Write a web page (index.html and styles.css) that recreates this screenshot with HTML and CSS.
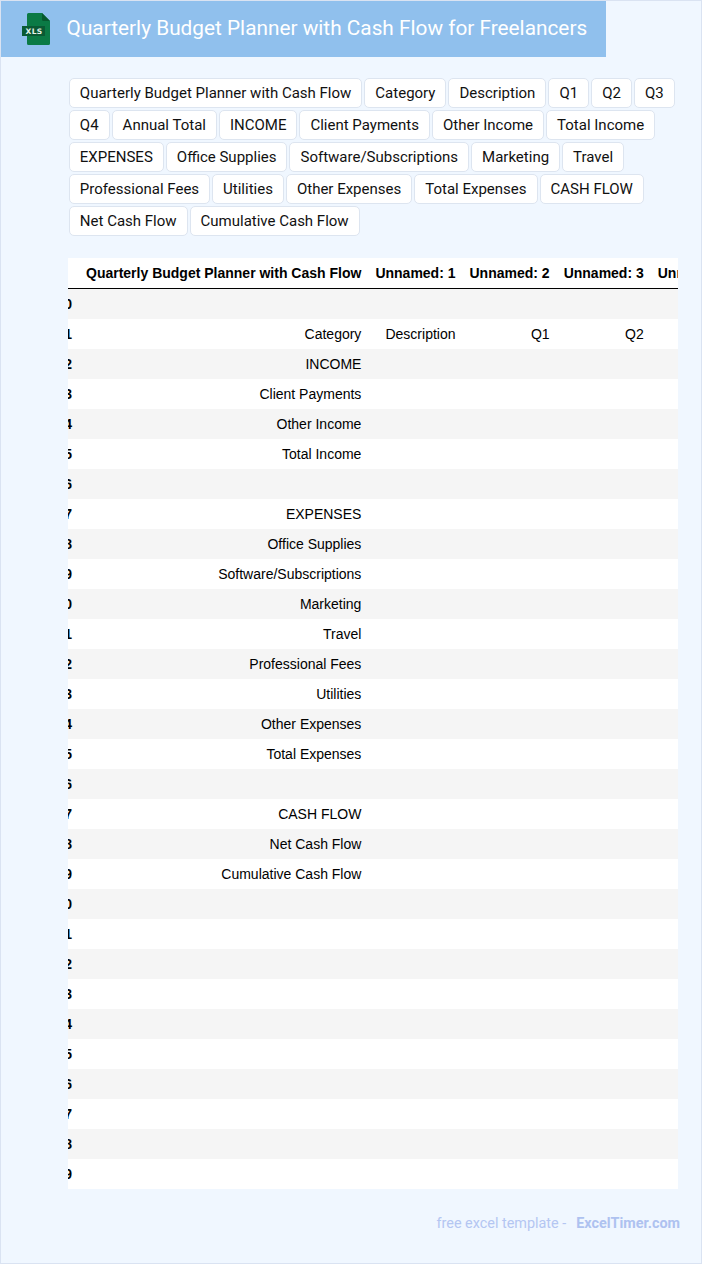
FILE: index.html
```html
<!DOCTYPE html>
<html lang="en">
<head>
<meta charset="utf-8">
<title>Quarterly Budget Planner with Cash Flow for Freelancers</title>
<link rel="stylesheet" href="styles.css">
</head>
<body>
<div class="page">
  <header class="banner">
    <svg class="logo" viewBox="0 0 30 32" width="30" height="32" aria-hidden="true">
      <path d="M5 1.500a1.500 1.500 0 0 1 1.500-1.500H20l8 8v22.500a1.500 1.500 0 0 1-1.500 1.500H6.500A1.500 1.500 0 0 1 5 30.500z" fill="#0b7a45"/>
      <path d="M20 0l8 8h-6.500a1.500 1.500 0 0 1-1.500-1.500z" fill="#07592f"/>
      <rect x="0" y="13" width="23" height="10" fill="#0a5a34"/>
      <text class="logo-text" x="12" y="21" text-anchor="middle">XLS</text>
    </svg>
    <h1 class="title">Quarterly Budget Planner with Cash Flow for Freelancers</h1>
  </header>
  <main class="content">
    <div class="tags">
      <span class="tag">Quarterly Budget Planner with Cash Flow</span>
      <span class="tag">Category</span>
      <span class="tag">Description</span>
      <span class="tag">Q1</span>
      <span class="tag">Q2</span>
      <span class="tag">Q3</span>
      <span class="tag">Q4</span>
      <span class="tag">Annual Total</span>
      <span class="tag">INCOME</span>
      <span class="tag">Client Payments</span>
      <span class="tag">Other Income</span>
      <span class="tag">Total Income</span>
      <span class="tag">EXPENSES</span>
      <span class="tag">Office Supplies</span>
      <span class="tag">Software/Subscriptions</span>
      <span class="tag">Marketing</span>
      <span class="tag">Travel</span>
      <span class="tag">Professional Fees</span>
      <span class="tag">Utilities</span>
      <span class="tag">Other Expenses</span>
      <span class="tag">Total Expenses</span>
      <span class="tag">CASH FLOW</span>
      <span class="tag">Net Cash Flow</span>
      <span class="tag">Cumulative Cash Flow</span>
    </div>
    <div class="table-wrap">
      <table class="sheet">
        <thead>
          <tr><th></th><th>Quarterly Budget Planner with Cash Flow</th><th>Unnamed: 1</th><th>Unnamed: 2</th><th>Unnamed: 3</th><th>Unnamed: 4</th></tr>
        </thead>
        <tbody>
          <tr><th>0</th><td></td><td></td><td></td><td></td><td></td></tr>
          <tr><th>1</th><td>Category</td><td>Description</td><td>Q1</td><td>Q2</td><td>Q3</td></tr>
          <tr><th>2</th><td>INCOME</td><td></td><td></td><td></td><td></td></tr>
          <tr><th>3</th><td>Client Payments</td><td></td><td></td><td></td><td></td></tr>
          <tr><th>4</th><td>Other Income</td><td></td><td></td><td></td><td></td></tr>
          <tr><th>5</th><td>Total Income</td><td></td><td></td><td></td><td></td></tr>
          <tr><th>6</th><td></td><td></td><td></td><td></td><td></td></tr>
          <tr><th>7</th><td>EXPENSES</td><td></td><td></td><td></td><td></td></tr>
          <tr><th>8</th><td>Office Supplies</td><td></td><td></td><td></td><td></td></tr>
          <tr><th>9</th><td>Software/Subscriptions</td><td></td><td></td><td></td><td></td></tr>
          <tr><th>10</th><td>Marketing</td><td></td><td></td><td></td><td></td></tr>
          <tr><th>11</th><td>Travel</td><td></td><td></td><td></td><td></td></tr>
          <tr><th>12</th><td>Professional Fees</td><td></td><td></td><td></td><td></td></tr>
          <tr><th>13</th><td>Utilities</td><td></td><td></td><td></td><td></td></tr>
          <tr><th>14</th><td>Other Expenses</td><td></td><td></td><td></td><td></td></tr>
          <tr><th>15</th><td>Total Expenses</td><td></td><td></td><td></td><td></td></tr>
          <tr><th>16</th><td></td><td></td><td></td><td></td><td></td></tr>
          <tr><th>17</th><td>CASH FLOW</td><td></td><td></td><td></td><td></td></tr>
          <tr><th>18</th><td>Net Cash Flow</td><td></td><td></td><td></td><td></td></tr>
          <tr><th>19</th><td>Cumulative Cash Flow</td><td></td><td></td><td></td><td></td></tr>
          <tr><th>20</th><td></td><td></td><td></td><td></td><td></td></tr>
          <tr><th>21</th><td></td><td></td><td></td><td></td><td></td></tr>
          <tr><th>22</th><td></td><td></td><td></td><td></td><td></td></tr>
          <tr><th>23</th><td></td><td></td><td></td><td></td><td></td></tr>
          <tr><th>24</th><td></td><td></td><td></td><td></td><td></td></tr>
          <tr><th>25</th><td></td><td></td><td></td><td></td><td></td></tr>
          <tr><th>26</th><td></td><td></td><td></td><td></td><td></td></tr>
          <tr><th>27</th><td></td><td></td><td></td><td></td><td></td></tr>
          <tr><th>28</th><td></td><td></td><td></td><td></td><td></td></tr>
          <tr><th>29</th><td></td><td></td><td></td><td></td><td></td></tr>
        </tbody>
      </table>
    </div>
  </main>
  <footer class="foot">
    <span class="foot-label">free excel template -</span>
    <a class="foot-link" href="#">ExcelTimer.com</a>
  </footer>
</div>
</body>
</html>
```
FILE: styles.css
```css
* { box-sizing: border-box; }
html, body { margin: 0; padding: 0; }
body { background: #f0f7ff; }
.page {
  width: 702px;
  height: 1264px;
  border: 1px solid #dae3f2;
  background: #f0f7ff;
  font-family: Roboto, sans-serif;
  overflow: hidden;
}
.banner {
  width: 605px;
  height: 56px;
  background: #90c0ed;
  display: flex;
  align-items: center;
  padding-left: 21px;
  gap: 14.600px;
}
.logo { flex: none; }
.logo-text {
  font-family: "DejaVu Sans", sans-serif;
  font-size: 7.500px;
  font-weight: 700;
  letter-spacing: 0.300px;
  fill: #e4f3ea;
}
.title {
  margin: 0 0 3px;
  font-size: 20.800px;
  font-weight: 400;
  color: #fff;
  white-space: nowrap;
}
.content { padding: 21px 23px 0 67px; }
.tags {
  display: flex;
  flex-wrap: wrap;
  gap: 2px;
  padding-left: 0.850px;
  margin-bottom: 22px;
}
.tag {
  height: 30px;
  padding: 0 10px;
  display: flex;
  align-items: center;
  background: #fff;
  border: 1px solid #dde5f0;
  border-radius: 5px;
  font-size: 15px;
  color: #111;
  white-space: nowrap;
}
.table-wrap {
  width: 610px;
  overflow: hidden;
  background: #fff;
}
.sheet {
  margin-left: -19px;
  border-collapse: separate;
  border-spacing: 0;
  font-family: "Liberation Sans", Arial, sans-serif;
  font-size: 14px;
  color: #000;
  white-space: nowrap;
}
.sheet th, .sheet td {
  height: 30px;
  padding: 0 7px;
  text-align: right;
}
.sheet thead th {
  height: 31px;
  border-bottom: 1px solid #000;
}
.sheet th { font-weight: 700; }
.sheet tbody tr:nth-child(odd) { background: #f5f5f5; }
.sheet thead th:first-child, .sheet tbody th { min-width: 30px; }
.foot {
  margin: 26px 21px 0 0;
  display: flex;
  justify-content: flex-end;
  gap: 10px;
  font-size: 14.400px;
  color: #b4c6f2;
}
.foot-link {
  color: #aec2f0;
  font-weight: 700;
  text-decoration: none;
}
```
